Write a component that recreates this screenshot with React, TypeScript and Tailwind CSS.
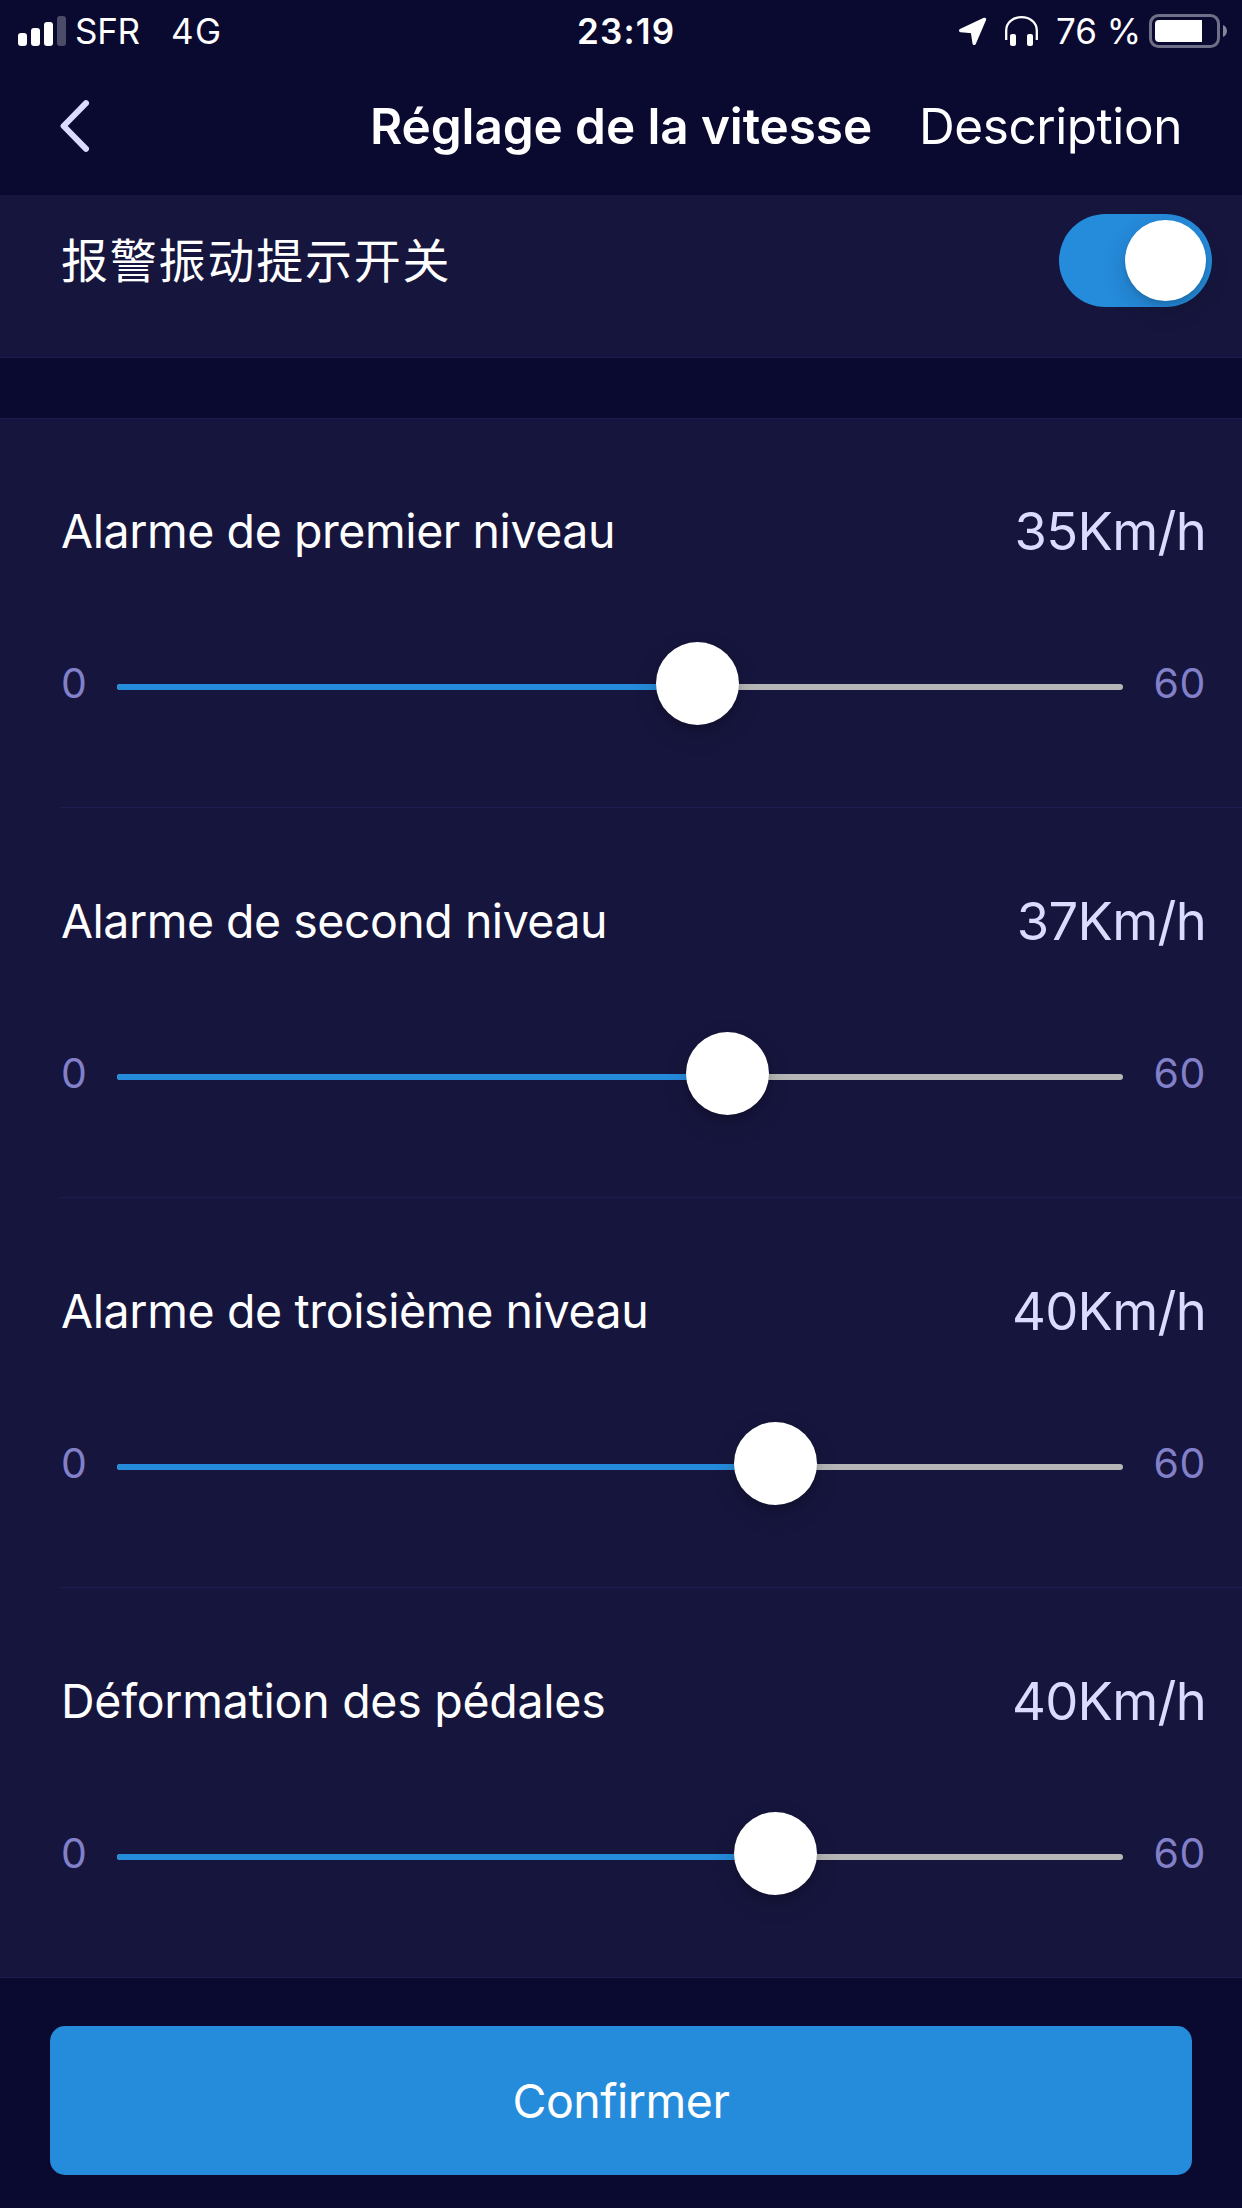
import React, { useState } from "react";

const MAX_SPEED = 60;

// speeds are stored unrounded, the label shows the nearest km/h
const alarms = [
  { name: "Alarme de premier niveau", speed: 35, spacing: "tracking-[-0.43px]" },
  { name: "Alarme de second niveau", speed: 36.94, spacing: "tracking-[-0.5px]" },
  { name: "Alarme de troisième niveau", speed: 40.04, spacing: "tracking-[-0.38px]" },
  { name: "Déformation des pédales", speed: 40.04, spacing: "tracking-[-0.27px]" },
];

const StatusBar = () => {
  return (
    <div className="flex items-center h-[62px] pl-[18px] pr-[15px] text-[35px] leading-none">
      <div className="flex items-center w-[559px]">
        <svg width="48" height="30" viewBox="0 0 48 30" fill="#fff">
          <rect x="0" y="17" width="9" height="13" rx="3" />
          <rect x="13" y="12" width="9" height="18" rx="3" />
          <rect x="26" y="6" width="9" height="24" rx="3" />
          <rect x="39" y="0" width="9" height="30" rx="3" opacity="0.27" />
        </svg>
        <span className="ml-[9px] w-[96px] tracking-[-0.3px]">SFR</span>
        <span className="tracking-[1.5px]">4G</span>
      </div>
      <span className="font-semibold tracking-[1.2px]">23:19</span>
      <div className="flex items-center ml-auto">
        {/* location arrow */}
        <svg width="29" height="29" viewBox="0 0 29 29">
          <path
            d="M26.5 2.4 L2.7 13.6 L14.4 14.6 L16.2 26.4 Z"
            fill="#fff"
            stroke="#fff"
            strokeWidth="3.4"
            strokeLinejoin="round"
          />
        </svg>
        {/* headphones */}
        <svg className="ml-[18px]" width="33" height="30" viewBox="0 0 33 30">
          <path
            d="M1.2 24 V14.5 C1.2 6.5 8 1.2 16.5 1.2 S31.8 6.5 31.8 14.5 V24"
            fill="none"
            stroke="#fff"
            strokeWidth="2.3"
          />
          <rect x="5" y="18" width="6" height="12" rx="2" fill="#fff" />
          <rect x="22" y="18" width="6" height="12" rx="2" fill="#fff" />
        </svg>
        <span className="ml-[18px] w-[93px]">76 %</span>
        <svg width="78" height="34" viewBox="0 0 78 34">
          <rect
            x="1.5"
            y="1.5"
            width="68"
            height="31"
            rx="8"
            fill="none"
            stroke="#6f6f87"
            strokeWidth="3"
          />
          <path d="M53 6 H10 a4 4 0 0 0 -4 4 V24 a4 4 0 0 0 4 4 H53 Z" fill="#fff" />
          <path d="M74 11 C79.3 13 79.3 21 74 23 Z" fill="#85859a" />
        </svg>
      </div>
    </div>
  );
};

const Navbar = () => {
  return (
    <nav className="flex items-center h-32 pl-[60px] text-[49.5px] leading-none">
      <button>
        <svg width="30" height="52" viewBox="0 0 30 52">
          <path
            d="M26 3.2 L3.6 26 L26 48.8"
            fill="none"
            stroke="#dbdbff"
            strokeWidth="6"
            strokeLinecap="round"
            strokeLinejoin="round"
          />
        </svg>
      </button>
      <h1 className="ml-[280px] pt-[2px] font-semibold tracking-[-0.11px] whitespace-nowrap">
        Réglage de la vitesse
      </h1>
      <button className="ml-[47px] pt-[2px] tracking-[-0.45px]">Description</button>
    </nav>
  );
};

const Toggle = ({ on, onChange }: { on: boolean; onChange: () => void }) => {
  return (
    <button
      role="switch"
      aria-checked={on}
      onClick={onChange}
      className={`flex items-center w-[153px] h-[93px] px-[6px] rounded-full ${
        on ? "bg-[#258bdb] justify-end" : "bg-[#b6b6b6] justify-start"
      }`}
    >
      <span className="size-[81px] rounded-full bg-white shadow-[0_9px_24px_rgba(0,0,0,0.16),0_3px_4px_rgba(0,0,0,0.1)]" />
    </button>
  );
};

const Slider = ({ value }: { value: number }) => {
  const ratio = value / MAX_SPEED;

  return (
    <div className="relative flex-1 h-[84px] pt-[43px]">
      <div className="h-[6px] rounded-full bg-[#b6b6b6] overflow-hidden">
        <div className="h-full bg-[#258bdb]" style={{ width: `${ratio * 100}%` }} />
      </div>
      {/* the thumb overhangs the track by 3px at both ends */}
      <div
        className="absolute top-px size-[83px] rounded-full bg-white shadow-[0_9px_24px_rgba(0,0,0,0.16),0_3px_6px_rgba(0,0,0,0.12)]"
        style={{ left: `calc(${ratio} * (100% - 77px) - 3px)` }}
      />
    </div>
  );
};

const App = () => {
  const [vibration, setVibration] = useState(true);

  return (
    <div className="flex flex-col w-[1242px] h-[2208px] overflow-hidden bg-[#0a0930] text-white font-['Inter','Noto_Sans_CJK_SC',sans-serif]">
      <header className="h-[195px]">
        <StatusBar />
        <Navbar />
      </header>

      <div className="h-[163px] bg-[#16153d] border-b border-[#1c1b52]">
        <div className="flex items-center justify-between h-[131px] pl-[61px] pr-[30px]">
          <span className="pb-[6px] font-['Noto_Sans_CJK_SC',sans-serif] text-[47px] leading-none tracking-[1.8px]">
            报警振动提示开关
          </span>
          <Toggle on={vibration} onChange={() => setVibration(!vibration)} />
        </div>
      </div>

      <ul className="mt-[60px] bg-[#16153d] shadow-[inset_0_1px_0_#1c1b52,inset_0_-1px_0_#1c1b52]">
        {alarms.map((alarm) => (
          <li
            key={alarm.name}
            className="h-[390px] ml-[60px] pt-[81px] pr-9 border-b border-[#1c1b52]"
          >
            <div className="flex items-center justify-between h-16 pl-px leading-none">
              <span className={`text-[46.5px] ${alarm.spacing}`}>{alarm.name}</span>
              <span className="text-[52.5px] tracking-[-0.7px] text-[#dbdbff]">
                {Math.round(alarm.speed)}Km/h
              </span>
            </div>
            <div className="flex items-center mt-[78px] text-[41px] leading-none text-[#8280c8]">
              <span className="w-[57px] pl-px">0</span>
              <Slider value={alarm.speed} />
              <span className="w-[83px] text-right tracking-[0.58px]">{MAX_SPEED}</span>
            </div>
          </li>
        ))}
      </ul>

      <button className="mt-12 mx-[50px] h-[149px] pt-[2px] rounded-[15px] bg-[#258bdb] text-[46.5px] leading-none tracking-[-0.48px]">
        Confirmer
      </button>
    </div>
  );
};

export default App;
